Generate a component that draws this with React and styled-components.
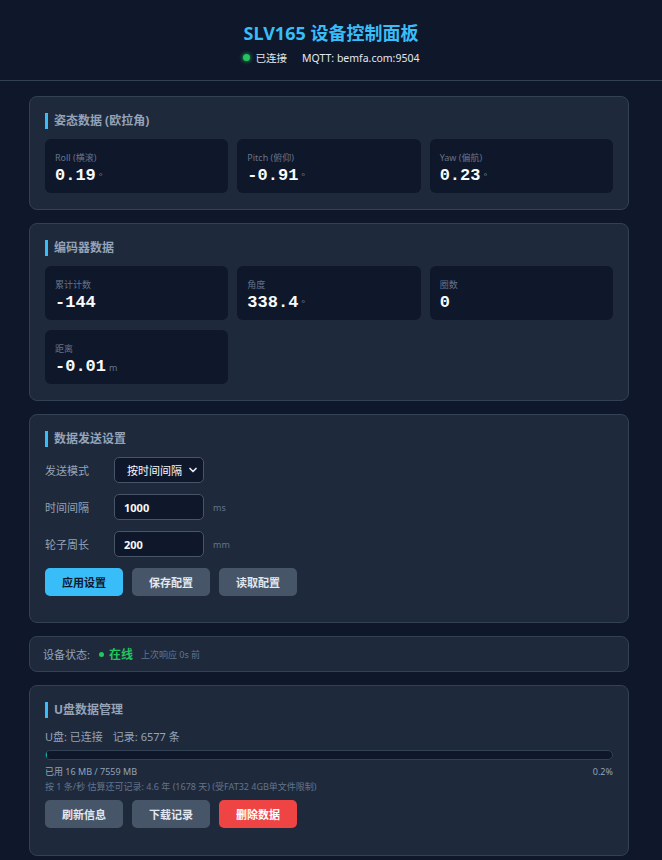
import React from 'react'
import styled, { createGlobalStyle, css } from 'styled-components'

const GlobalStyle = createGlobalStyle`
    * { box-sizing: border-box; }
    body {
        margin: 0;
        background: #0f172a;
        color: #e2e8f0;
        font-family: "Noto Sans", "Noto Sans CJK SC", sans-serif;
        font-size: 11px;
    }
`

const Header = styled.header`
    border-bottom: 1px solid #334155;
    padding: 20px 0 15px;
    text-align: center;
`

const Title = styled.h1`
    margin: 0;
    font-size: 18px;
    line-height: 26px;
    font-weight: 700;
    color: #38bdf8;
`

const ConnLine = styled.div`
    display: flex;
    justify-content: center;
    align-items: center;
    gap: 6px;
    margin-top: 4px;
    font-size: 10.5px;
    color: #e2e8f0;
`

const Dot = styled.span`
    display: inline-block;
    width: 7px;
    height: 7px;
    border-radius: 50%;
    background: #22c55e;
    box-shadow: 0 0 4px #22c55e;
`

const Mqtt = styled.span`
    margin-left: 9px;
`

const Main = styled.main`
    width: 600px;
    margin: 15px 0 0 29px;
    display: flex;
    flex-direction: column;
    gap: 13px;
`

const Card = styled.section`
    background: #1e293b;
    border: 1px solid #334155;
    border-radius: 8px;
    padding: 16px 15px;
    ${p => p.slim && css`
        padding: 8px 13px;
    `}
`

const CardTitle = styled.h2`
    margin: 0 0 10px;
    font-size: 12px;
    line-height: 16px;
    font-weight: 700;
    color: #94a3b8;
    border-left: 3px solid #38bdf8;
    padding-left: 6px;
`

const TileGrid = styled.div`
    display: grid;
    grid-template-columns: repeat(3, 1fr);
    gap: 10px 9px;
`

const Tile = styled.div`
    background: #0f172a;
    border-radius: 6px;
    height: 54px;
    padding: 12px 10px 0;
`

const TileLabel = styled.div`
    font-size: 9px;
    line-height: 14px;
    color: #64748b;
`

const TileValue = styled.div`
    font-family: "Liberation Mono", "DejaVu Sans Mono", monospace;
    font-weight: 700;
    font-size: 17px;
    line-height: 22px;
    color: #f8fafc;
`

const Unit = styled.span`
    font-family: "Noto Sans", sans-serif;
    font-weight: 400;
    font-size: 9px;
    color: #64748b;
    margin-left: 3px;
`

const FormRow = styled.div`
    display: flex;
    align-items: center;
    margin-bottom: 11px;
`

const FieldLabel = styled.label`
    width: 69px;
    font-size: 11px;
    color: #94a3b8;
`

const fieldBox = css`
    width: 90px;
    height: 26px;
    background: #0f172a;
    border: 1px solid #475569;
    border-radius: 5px;
    color: #f8fafc;
    font-family: "Noto Sans", "Noto Sans CJK SC", sans-serif;
    font-size: 11px;
    font-weight: 700;
    padding: 0 9px;
    outline: none;
`

const Input = styled.input`
    ${fieldBox}
`

const Select = styled.div`
    ${fieldBox}
    display: flex;
    align-items: center;
    justify-content: space-between;
    font-weight: 400;
    padding: 0 4px 0 12px;
`

const FieldUnit = styled.span`
    margin-left: 9px;
    font-size: 9px;
    color: #64748b;
`

const ButtonRow = styled.div`
    display: flex;
    gap: 9px;
    margin-top: ${p => p.top || 0}px;
`

const Button = styled.button`
    width: 78px;
    height: 28px;
    border: none;
    border-radius: 5px;
    font-family: "Noto Sans", "Noto Sans CJK SC", sans-serif;
    font-size: 11px;
    font-weight: 700;
    color: #e2e8f0;
    background: #475569;
    ${p => p.primary && css`
        background: #38bdf8;
        color: #0f172a;
    `}
    ${p => p.danger && css`
        background: #ef4444;
        color: #fff;
    `}
`

const StatusLine = styled.div`
    display: flex;
    align-items: center;
    font-size: 11px;
    color: #94a3b8;
`

const Online = styled.span`
    display: inline-flex;
    align-items: center;
    gap: 5px;
    margin-left: 9px;
    font-size: 12px;
    font-weight: 700;
    color: #22c55e;
`

const SmallDot = styled.span`
    width: 5px;
    height: 5px;
    border-radius: 50%;
    background: #22c55e;
`

const Muted = styled.span`
    margin-left: 8px;
    font-size: 9px;
    color: #64748b;
`

const DiskLine = styled.div`
    font-size: 11px;
    color: #94a3b8;
    margin: 2px 0 6px;
    span + span { margin-left: 10px; }
`

const Bar = styled.div`
    height: 10px;
    border: 1px solid #334155;
    border-radius: 5px;
    background: #0f172a;
    overflow: hidden;
`

const BarFill = styled.div`
    height: 100%;
    background: #14b8a6;
`

const UsageRow = styled.div`
    display: flex;
    justify-content: space-between;
    margin-top: 5px;
    font-size: 9px;
    line-height: 13px;
    color: #94a3b8;
`

const Note = styled.div`
    font-size: 9px;
    line-height: 13px;
    margin-top: 2px;
    color: #64748b;
`

const Spacer = styled.div`
    height: ${p => p.h}px;
`

const Chevron = () => (
    <svg width="12" height="12" viewBox="0 0 24 24" fill="none" stroke="#e2e8f0" strokeWidth="3.5" strokeLinecap="round" strokeLinejoin="round">
        <path d="M6 9l6 6 6-6" />
    </svg>
)

const attitude = [
    { label: 'Roll (横滚)', value: '0.19', unit: '°' },
    { label: 'Pitch (俯仰)', value: '-0.91', unit: '°' },
    { label: 'Yaw (偏航)', value: '0.23', unit: '°' },
]

const encoder = [
    { label: '累计计数', value: '-144' },
    { label: '角度', value: '338.4', unit: '°' },
    { label: '圈数', value: '0' },
    { label: '距离', value: '-0.01', unit: 'm' },
]

function DataTile({ label, value, unit }) {
    return (
        <Tile>
            <TileLabel>{label}</TileLabel>
            <TileValue>
                {value}
                {unit && <Unit>{unit}</Unit>}
            </TileValue>
        </Tile>
    )
}

export default function App() {
    const used = 16
    const total = 7559
    const pct = (used / total) * 100

    return (
        <>
            <GlobalStyle />
            <Header>
                <Title>SLV165 设备控制面板</Title>
                <ConnLine>
                    <Dot />
                    <span>已连接</span>
                    <Mqtt>MQTT: bemfa.com:9504</Mqtt>
                </ConnLine>
            </Header>
            <Main>
                <Card>
                    <CardTitle>姿态数据 (欧拉角)</CardTitle>
                    <TileGrid>
                        {attitude.map(t => <DataTile key={t.label} {...t} />)}
                    </TileGrid>
                </Card>

                <Card>
                    <CardTitle>编码器数据</CardTitle>
                    <TileGrid>
                        {encoder.map(t => <DataTile key={t.label} {...t} />)}
                    </TileGrid>
                </Card>

                <Card>
                    <CardTitle>数据发送设置</CardTitle>
                    <FormRow>
                        <FieldLabel>发送模式</FieldLabel>
                        <Select>按时间间隔<Chevron /></Select>
                    </FormRow>
                    <FormRow>
                        <FieldLabel>时间间隔</FieldLabel>
                        <Input defaultValue="1000" />
                        <FieldUnit>ms</FieldUnit>
                    </FormRow>
                    <FormRow>
                        <FieldLabel>轮子周长</FieldLabel>
                        <Input defaultValue="200" />
                        <FieldUnit>mm</FieldUnit>
                    </FormRow>
                    <ButtonRow>
                        <Button primary>应用设置</Button>
                        <Button>保存配置</Button>
                        <Button>读取配置</Button>
                    </ButtonRow>
                    <Spacer h={10} />
                </Card>

                <Card slim>
                    <StatusLine>
                        设备状态:
                        <Online><SmallDot />在线</Online>
                        <Muted>上次响应 0s 前</Muted>
                    </StatusLine>
                </Card>

                <Card>
                    <CardTitle>U盘数据管理</CardTitle>
                    <DiskLine>
                        <span>U盘: 已连接</span>
                        <span>记录: 6577 条</span>
                    </DiskLine>
                    <Bar>
                        <BarFill style={{ width: `${pct}%` }} />
                    </Bar>
                    <UsageRow>
                        <span>已用 {used} MB / {total} MB</span>
                        <span>{pct.toFixed(1)}%</span>
                    </UsageRow>
                    <Note>按 1 条/秒 估算还可记录: 4.6 年 (1678 天) (受FAT32 4GB单文件限制)</Note>
                    <ButtonRow top={7}>
                        <Button>刷新信息</Button>
                        <Button>下载记录</Button>
                        <Button danger>删除数据</Button>
                    </ButtonRow>
                    <Spacer h={11} />
                </Card>
            </Main>
        </>
    )
}
